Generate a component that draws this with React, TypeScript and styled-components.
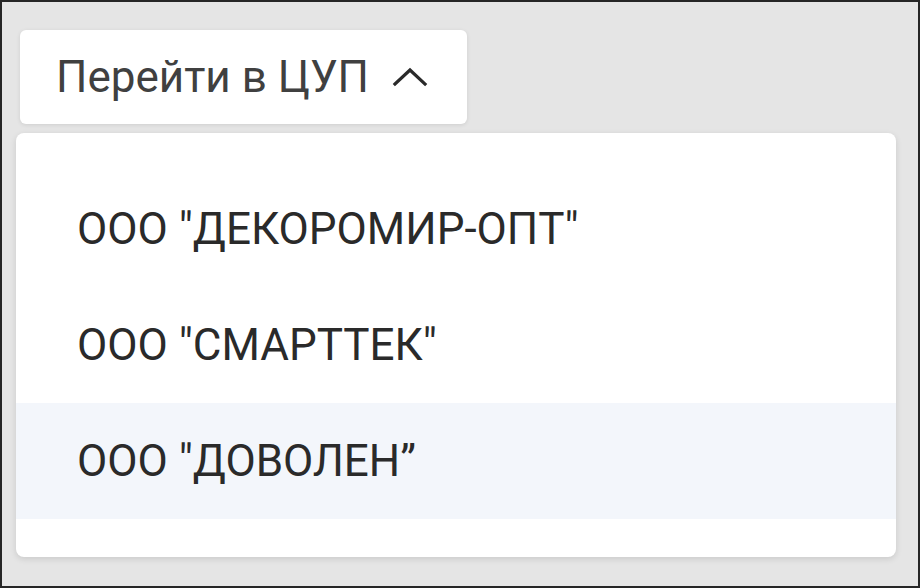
import React from 'react';
import styled, { createGlobalStyle } from 'styled-components';

const GlobalStyle = createGlobalStyle`
  html, body {
    margin: 0;
    padding: 0;
  }
  body {
    font-family: Roboto, "Noto Sans", "Liberation Sans", sans-serif;
  }
`;

const Frame = styled.div`
  box-sizing: border-box;
  width: 920px;
  height: 588px;
  border: 2px solid #262626;
  background: #e5e5e5;
  padding: 28px 24px 28px 14px;
  display: flex;
  flex-direction: column;
  align-items: flex-start;
  gap: 9px;
`;

const Trigger = styled.button`
  box-sizing: border-box;
  margin-left: 4px;
  height: 94px;
  width: 447px;
  padding: 0 39px 0 36px;
  display: flex;
  align-items: center;
  justify-content: space-between;
  border: none;
  border-radius: 6px;
  background: #ffffff;
  box-shadow: 0 1px 4px rgba(0, 0, 0, 0.1);
  font-family: inherit;
  font-size: 44px;
  color: #404040;
  white-space: nowrap;
  cursor: pointer;
`;

const Menu = styled.ul`
  box-sizing: border-box;
  list-style: none;
  margin: 0;
  width: 880px;
  padding: 38px 0;
  border-radius: 8px;
  background: #ffffff;
  box-shadow: 0 2px 6px rgba(0, 0, 0, 0.12);
`;

const Item = styled.li<{ $active?: boolean }>`
  height: 116px;
  display: flex;
  align-items: center;
  padding-left: 61px;
  font-size: 44px;
  color: #2a2a2a;
  white-space: nowrap;
  background: ${(p) => (p.$active ? '#f3f6fb' : 'transparent')};
`;

const Chevron = () => (
  <svg width="36" height="20" viewBox="0 0 36 20" fill="none">
    <path d="M3 17 L18 3 L33 17" stroke="#2a2a2a" strokeWidth="3.2" strokeLinecap="square" />
  </svg>
);

const companies = ['ООО "ДЕКОРОМИР-ОПТ"', 'ООО "СМАРТТЕК"', 'ООО "ДОВОЛЕН”'];

export default function App() {
  return (
    <>
      <GlobalStyle />
      <Frame>
        <Trigger>
          <span>Перейти в ЦУП</span>
          <Chevron />
        </Trigger>
        <Menu>
          {companies.map((name, i) => (
            <Item key={name} $active={i === 2}>
              {name}
            </Item>
          ))}
        </Menu>
      </Frame>
    </>
  );
}
